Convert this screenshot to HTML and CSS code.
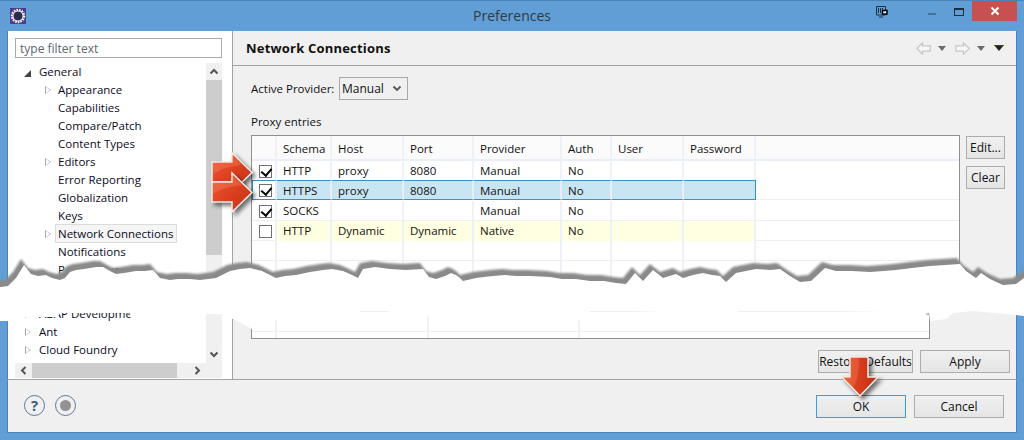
FILE: index.html
```html
<!DOCTYPE html>
<html lang="en">
<head>
<meta charset="utf-8">
<title>Preferences</title>
<link rel="stylesheet" href="styles.css">
</head>
<body>
<div class="window">
  <section class="fragment fragment-top">
    <header class="titlebar">
      <svg class="logo" width="16" height="16" viewBox="0 0 16 16">
        <rect width="16" height="16" fill="#4b3a8e"/>
        <circle cx="8" cy="8" r="6" fill="none" stroke="#f4f4f4" stroke-width="2.4" stroke-dasharray="1.6 1"/>
        <circle cx="8" cy="8" r="5" fill="#2c2a4a" stroke="#f4f4f4" stroke-width="1"/>
      </svg>
      <span class="title">Preferences</span>
      <div class="window-controls">
        <svg class="ctl-restore" width="12" height="12" viewBox="0 0 12 12">
          <path d="M.5.5h9v8.5h-9zM3 11h4" fill="none" stroke="#1f3044"/>
          <path d="M2.500 2v5M4.500 2v5M6.500 2v2" stroke="#1f3044"/>
          <rect x="6.500" y="4.500" width="4.500" height="3.500" fill="#f2f6fa" stroke="#000" stroke-width="1.500"/>
        </svg>
        <span class="ctl-min"></span>
        <span class="ctl-max"></span>
        <span class="ctl-close">
          <svg width="10" height="10" viewBox="0 0 10 10"><path d="M1.500 1.500l7 7M8.500 1.500l-7 7" stroke="#fff" stroke-width="2"/></svg>
        </span>
      </div>
    </header>
    <div class="content">
      <aside class="nav">
        <div class="filter">type filter text</div>
        <div class="tree-wrap">
          <ul class="tree">
            <li class="lvl0"><i class="tw open"></i>General</li>
            <li class="lvl1"><i class="tw"></i>Appearance</li>
            <li class="lvl1">Capabilities</li>
            <li class="lvl1">Compare/Patch</li>
            <li class="lvl1">Content Types</li>
            <li class="lvl1"><i class="tw"></i>Editors</li>
            <li class="lvl1">Error Reporting</li>
            <li class="lvl1">Globalization</li>
            <li class="lvl1">Keys</li>
            <li class="lvl1"><i class="tw"></i><span class="current">Network Connections</span></li>
            <li class="lvl1">Notifications</li>
            <li class="lvl1">Perspectives</li>
          </ul>
          <div class="vscroll">
            <svg class="chev" width="16" height="17" viewBox="0 0 16 17"><path d="M4.500 10.500l3.500-3.500 3.500 3.500" fill="none" stroke="#555" stroke-width="2"/></svg>
            <div class="vthumb"></div>
          </div>
        </div>
      </aside>
      <main class="pane">
        <div class="pane-head">
          <h1>Network Connections</h1>
          <div class="pane-tools">
            <svg width="15" height="13" viewBox="0 0 15 13"><path d="M.8 6.500L6.500.8v3h7.700v5.400H6.500v3z" fill="#f6f6f6" stroke="#c6c6c6" stroke-width="1.200"/></svg>
            <svg class="tri" width="8" height="5" viewBox="0 0 8 5"><path d="M0 0h8L4 5z" fill="#6b6b6b"/></svg>
            <svg width="15" height="13" viewBox="0 0 15 13"><path d="M14.200 6.500L8.500.8v3H.8v5.400h7.700v3z" fill="#f6f6f6" stroke="#c6c6c6" stroke-width="1.200"/></svg>
            <svg class="tri" width="8" height="5" viewBox="0 0 8 5"><path d="M0 0h8L4 5z" fill="#6b6b6b"/></svg>
            <svg class="tri-menu" width="10" height="6" viewBox="0 0 10 6"><path d="M0 0h10L5 6z" fill="#222"/><path d="M0 0h10l-1 1H1z" fill="#43308a"/></svg>
          </div>
        </div>
        <div class="pane-body">
          <div class="provider">
            <span class="provider-label">Active Provider:</span>
            <div class="select">Manual
              <svg width="10" height="7" viewBox="0 0 10 7"><path d="M1.500 1.500L5 5l3.500-3.500" fill="none" stroke="#555" stroke-width="1.800"/></svg>
            </div>
          </div>
          <div class="group-label">Proxy entries</div>
          <div class="entries">
            <div class="grid">
              <div class="row head"><span></span><span>Schema</span><span>Host</span><span>Port</span><span>Provider</span><span>Auth</span><span>User</span><span>Password</span><span></span></div>
              <div class="row"><span><b class="check on"></b></span><span>HTTP</span><span>proxy</span><span>8080</span><span>Manual</span><span>No</span><span></span><span></span><span></span></div>
              <div class="row selected"><span><b class="check on"></b></span><span>HTTPS</span><span>proxy</span><span>8080</span><span>Manual</span><span>No</span><span></span><span></span><span></span></div>
              <div class="row"><span><b class="check on"></b></span><span>SOCKS</span><span></span><span></span><span>Manual</span><span>No</span><span></span><span></span><span></span></div>
              <div class="row native"><span><b class="check"></b></span><span>HTTP</span><span>Dynamic</span><span>Dynamic</span><span>Native</span><span>No</span><span></span><span></span><span></span></div>
              <div class="row"><span></span><span></span><span></span><span></span><span></span><span></span><span></span><span></span><span></span></div>
              <div class="row"><span></span><span></span><span></span><span></span><span></span><span></span><span></span><span></span><span></span></div>
              <div class="row"><span></span><span></span><span></span><span></span><span></span><span></span><span></span><span></span><span></span></div>
            </div>
            <div class="side-buttons">
              <button class="btn">Edit...</button>
              <button class="btn">Clear</button>
            </div>
          </div>
        </div>
      </main>
    </div>
  </section>

  <section class="fragment fragment-bottom">
    <div class="content content-low">
      <aside class="nav nav-low">
        <div class="tree-wrap tree-wrap-low">
          <ul class="tree">
            <li class="lvl0"><i class="tw"></i>ABAP Development</li>
            <li class="lvl0"><i class="tw"></i>Ant</li>
            <li class="lvl0"><i class="tw"></i>Cloud Foundry</li>
          </ul>
          <div class="vscroll vscroll-low">
            <div class="vthumb-none"></div>
            <svg class="chev" width="16" height="17" viewBox="0 0 16 17"><path d="M4.500 6.500l3.500 3.500 3.500-3.500" fill="none" stroke="#555" stroke-width="2"/></svg>
          </div>
        </div>
        <div class="hscroll">
          <svg width="17" height="15" viewBox="0 0 17 15"><path d="M10.500 4L7 7.500l3.500 3.500" fill="none" stroke="#555" stroke-width="2"/></svg>
          <div class="hthumb"></div>
          <svg width="17" height="15" viewBox="0 0 17 15"><path d="M6.500 4L10 7.500 6.500 11" fill="none" stroke="#555" stroke-width="2"/></svg>
        </div>
      </aside>
      <main class="pane pane-low">
        <div class="grid-rest">
          <div class="rest-row tall"><span></span><span></span><span></span><span></span></div>
          <div class="rest-row"><span></span><span></span><span></span><span></span></div>
          <div class="rest-row last"><span></span><span></span><span></span><span></span></div>
        </div>
        <div class="pane-actions">
          <button class="btn btn-restore">Restore Defaults</button>
          <button class="btn btn-apply">Apply</button>
        </div>
      </main>
    </div>
    <footer class="footer">
      <div class="footer-icons">
        <span class="round help">?</span>
        <span class="round record"><i></i></span>
      </div>
      <div class="footer-actions">
        <button class="btn btn-wide btn-default">OK</button>
        <button class="btn btn-wide">Cancel</button>
      </div>
    </footer>
  </section>

  <svg class="annotations" width="1024" height="440" viewBox="0 0 1024 440">
    <defs>
      <linearGradient id="redH" x1="0" y1="0" x2="1" y2="1">
        <stop offset="0" stop-color="#ee5a38"/>
        <stop offset=".5" stop-color="#dc4020"/>
        <stop offset="1" stop-color="#bd3210"/>
      </linearGradient>
      <linearGradient id="redV" x1="0" y1="0" x2="1" y2="0">
        <stop offset="0" stop-color="#e14a28"/>
        <stop offset=".5" stop-color="#d83c1c"/>
        <stop offset="1" stop-color="#b9300f"/>
      </linearGradient>
    </defs>
    <polygon class="tear" points="-8,287 8,285 16,277 24,264 31,273 38,275 46,274 52,277 60,279 65,277 70,271 76,269 84,268 96,266 103,266 110,270 116,273 124,272 136,270 145,270 153,269 160,277 170,279 178,278 190,278 200,279 216,277 230,270 240,268 250,267 262,270 276,277 285,275 296,274 310,271 323,269 332,268 343,270 350,273 358,277 363,268 375,266 390,268 406,269 423,268 429,276 436,278 445,275 451,272 456,274 460,277 463,280 476,277 484,276 493,275 505,274 516,275 530,275 550,276 562,278 576,278 590,280 604,280 616,282 626,283 635,272 643,280 653,269 663,277 676,273 683,277 693,274 703,272 712,274 720,275 726,281 736,272 746,270 756,268 770,269 780,268 790,275 800,281 811,280 825,267 836,270 852,270 870,271 884,270 896,269 912,267 930,265 945,264 960,263 966,270 976,277 981,272 990,278 1003,284 1016,283 1032,271 1032,316 1016,314 973,310 953,312 947,318 930,320 929,312 795,309 742,309 730,313 598,309 591,309 585,316 580,320 575,318 430,315 425,316 378,309 361,309 355,314 280,318 252,328 233,318 222,313 206,313 200,320 131,320 130,312 60,312 58,316 8,316 8,320 -8,320"/>
    <g class="marker">
      <path d="M212 162h20v-9l20 19.500-20 19.500v-10h-20z" fill="url(#redH)"/>
      <path class="gloss" d="M213 163h19v-8l10 10c-10 1-20 3-29 9z"/>
    </g>
    <g class="marker">
      <path d="M212 182h20v-9l20 19.500-20 19.500v-10h-20z" fill="url(#redH)"/>
      <path class="gloss" d="M213 183h19v-8l10 10c-10 1-20 3-29 9z"/>
    </g>
    <g class="marker">
      <path d="M850 357h18v20h10l-18 19-18-19h8z" fill="url(#redV)"/>
      <path class="gloss" d="M851 358h8c0 12-1 22-6 30l-11-11h9z"/>
    </g>
  </svg>
</div>
</body>
</html>
```

FILE: styles.css
```css
* { box-sizing: border-box; }
html, body { margin: 0; padding: 0; }
body { font-family: "Open Sans", "Noto Sans", sans-serif; font-size: 11.5px; color: #111; }

.window { position: relative; width: 1024px; height: 440px; overflow: hidden; background: #619ed6; }
.fragment { display: flex; flex-direction: column; }
.fragment-top { height: 290px; }
.fragment-bottom { height: 150px; }

/* title bar */
.titlebar { height: 31px; flex: none; position: relative; display: flex; align-items: flex-start; padding: 7px 0 0 10px; border-top: 1px solid #4b84b8; }
.title { position: absolute; left: 0; right: 0; top: 5px; text-align: center; font-size: 14px; line-height: 20px; color: #2f3b47; }
.window-controls { margin-left: auto; display: flex; align-items: flex-start; position: relative; height: 21px; margin-top: -7px; margin-right: 7px; }
.ctl-restore { margin-top: 5px; margin-right: 40px; }
.ctl-min { width: 8px; height: 2px; background: #4a6f96; margin-top: 12px; margin-right: 18px; }
.ctl-max { width: 10px; height: 8px; border: 1px solid #1f2f40; border-top-width: 2px; margin-top: 7px; margin-right: 8px; }
.ctl-close { width: 45px; height: 20px; background: #c75050; display: flex; align-items: center; justify-content: center; }

/* panes */
.content { flex: 1; min-height: 0; display: flex; margin: 0 7px; border: 1px solid #4b84b8; border-width: 0 1px; overflow: hidden; }
.nav { flex: none; width: 225px; background: #fff; padding: 7px 10px 0 7px; border-right: 1px solid #a3a3a3; }
.filter { height: 20px; border: 1px solid #a9a9a9; line-height: 19px; padding-left: 4px; color: #5c6670; font-size: 12px; }
.tree-wrap { display: flex; margin-top: 5px; }
.tree { flex: 1; list-style: none; margin: 0; padding: 0; min-width: 0; }
.tree li { height: 18px; line-height: 18px; white-space: nowrap; position: relative; color: #0b0b1e; }
.lvl0 { padding-left: 24px; }
.lvl1 { padding-left: 43px; }
.tw { position: absolute; top: 5px; width: 0; height: 0; border-style: solid; border-width: 4.500px 0 4.500px 6px; border-color: transparent transparent transparent #a8a8a8; }
.tw::after { content: ""; position: absolute; left: -5.500px; top: -3px; border-style: solid; border-width: 3px 0 3px 4px; border-color: transparent transparent transparent #fff; }
.lvl0 .tw { left: 10px; }
.lvl1 .tw { left: 30px; }
.tw.open { top: 7px; left: 9px; border-width: 0 0 7px 7px; border-color: transparent transparent #444 transparent; }
.tw.open::after { display: none; }
.current { display: inline-block; margin: -1px 0 0 -3px; height: 19px; line-height: 17px; vertical-align: top; border: 1px solid #dcdcdc; background: #f5f5f5; padding: 0 3px 0 2px; }
.vscroll { width: 16px; flex: none; height: 300px; background: #f0f0f0; }
.chev { display: block; }
.vthumb { height: 175px; background: #cdcdcd; }
.vscroll-low { height: 73px; margin-top: 0; display: flex; flex-direction: column; justify-content: flex-end; }
.vthumb-none { flex: 1; }

/* right pane */
.pane { flex: 1; min-width: 0; background: #f0f0f0; }
.pane-head { height: 35px; border-bottom: 1px solid #a3a3a3; display: flex; align-items: center; padding: 0 12px 0 13px; }
h1 { margin: 0; font-size: 13px; font-weight: 700; color: #111; letter-spacing: .2px; }
.pane-tools { margin-left: auto; display: flex; align-items: center; }
.pane-tools .tri { margin: 0 9px 0 7px; }
.pane-body { padding: 11px 0 0 18px; }
.provider { display: flex; align-items: center; height: 23px; }
.provider-label { width: 88px; flex: none; }
.select { width: 69px; height: 23px; border: 1px solid #a9a9a9; background: #f0f0f0; display: flex; align-items: center; justify-content: space-between; padding: 0 5px 0 2px; line-height: 20px; font-size: 12px; }
.group-label { margin-top: 13px; line-height: 18px; }
.entries { display: flex; gap: 6px; margin-top: 4px; }
.grid { width: 709px; height: 200px; border: 1px solid #8c8f94; border-bottom: 0; background: #fff; flex: none; overflow: hidden; }
.row { display: grid; grid-template-columns: 25px 55px 72px 70px 88px 50px 72px 72px 1fr; height: 20px; line-height: 20px; border-bottom: 1px solid #efefef; }
.row > span { display: block; padding-left: 6px; border-right: 2px solid #edf1f8; min-width: 0; white-space: nowrap; }
.row > span:last-child { border-right: 0; }
.row.head { height: 25px; line-height: 25px; background: #fbfbfc; border-bottom: 2px solid #e9eef7; }
.row.selected > span { background: #c8e5f4; border-top: 1px solid #2f95cc; border-bottom: 1px solid #2f95cc; height: 20px; line-height: 19px; border-right-color: #e4eff7; }
.row.selected { border-bottom: 0; margin-top: -1px; height: 20px; }
.row.selected + .row { height: 21px; padding-top: 1px; }
.row.selected > span:first-child { background: #fff; border-left: 1px solid #2f95cc; }
.row.selected > span:nth-child(8) { border-right: 1px solid #2f95cc; }
.row.selected > span:last-child { background: #fff; border: 0; border-bottom: 1px solid #efefef; }
.row.native > span:nth-child(n+2):nth-child(-n+8) { background: #ffffe1; }
.row > span:first-child { padding: 0 0 0 7px; display: flex; align-items: center; }
.row.selected > span:first-child { padding-left: 6px; }

.check { display: block; width: 13px; height: 13px; border: 1px solid #6f6f6f; background: #fff; position: relative; }
.check.on::after { content: ""; position: absolute; left: 3px; top: 0; width: 5px; height: 8px; border: solid #000; border-width: 0 2.200px 2.200px 0; transform: rotate(40deg); }

.side-buttons { display: flex; flex-direction: column; gap: 7px; padding-top: 1px; }
.btn { font: inherit; font-size: 12px; color: #111; height: 23px; width: 39px; padding: 0; border: 1px solid #acacac; background: linear-gradient(#f0f0f0, #e5e5e5); }

/* lower fragment */
.content-low { height: 89px; flex: none; }
.nav-low { display: flex; flex-direction: column; padding-top: 0; }
.tree-wrap-low { margin-top: 0; height: 73px; padding-top: 15px; flex: none; }
.tree-wrap-low .vscroll-low { margin-top: -15px; }
.hscroll { height: 15px; display: flex; background: #f0f0f0; align-items: stretch; flex: none; }
.hscroll svg:last-child { margin-left: auto; margin-right: 16px; }
.hthumb { width: 145px; background: #cdcdcd; }
.pane-low { display: flex; flex-direction: column; }
.grid-rest { width: 679px; margin-left: 18px; height: 49px; flex: none; background: #fff; border: 1px solid #8c8f94; border-top: 0; }
.rest-row { display: grid; grid-template-columns: 25px 152px 151px 1fr; height: 20px; border-bottom: 1px solid #efefef; }
.rest-row.tall { height: 22px; }
.rest-row.last { height: 6px; border-bottom: 0; }
.rest-row > span { border-right: 2px solid #edf1f8; }
.rest-row > span:last-child { border-right: 0; }
.pane-actions { display: flex; margin: 11px 6px 0 auto; gap: 7px; }
.btn-restore { width: 95px; }
.btn-apply { width: 90px; }

.footer { height: 54px; flex: none; margin: 0 7px; background: #f0f0f0; border: 1px solid #4b84b8; border-top-color: #a3a3a3; display: flex; align-items: flex-start; padding: 15px 12px 0 16px; }
.footer-icons { display: flex; gap: 10px; }
.round { width: 21px; height: 21px; border: 1px solid #5f7595; border-radius: 50%; display: flex; align-items: center; justify-content: center; }
.help { font-weight: 700; font-size: 15px; color: #3f5a80; line-height: 19px; }
.record i { width: 11px; height: 11px; border-radius: 50%; background: #929292; }
.footer-actions { margin-left: auto; display: flex; gap: 8px; }
.btn-wide { width: 90px; }
.btn-default { border-color: #3c9ae8; }

/* overlay drawn on top of the screenshot */
.annotations { position: absolute; left: 0; top: 0; pointer-events: none; }
.tear { fill: #fff; transform: translateY(1px); filter: drop-shadow(-3px -6px 1px #8a8a8a); }
.marker path { stroke: #f3ece8; stroke-width: 1.500px; }
.marker .gloss { stroke: none; fill: rgba(255,150,110,.28); }
.marker { filter: drop-shadow(3px 3px 2px rgba(0,0,0,.55)); }
```
